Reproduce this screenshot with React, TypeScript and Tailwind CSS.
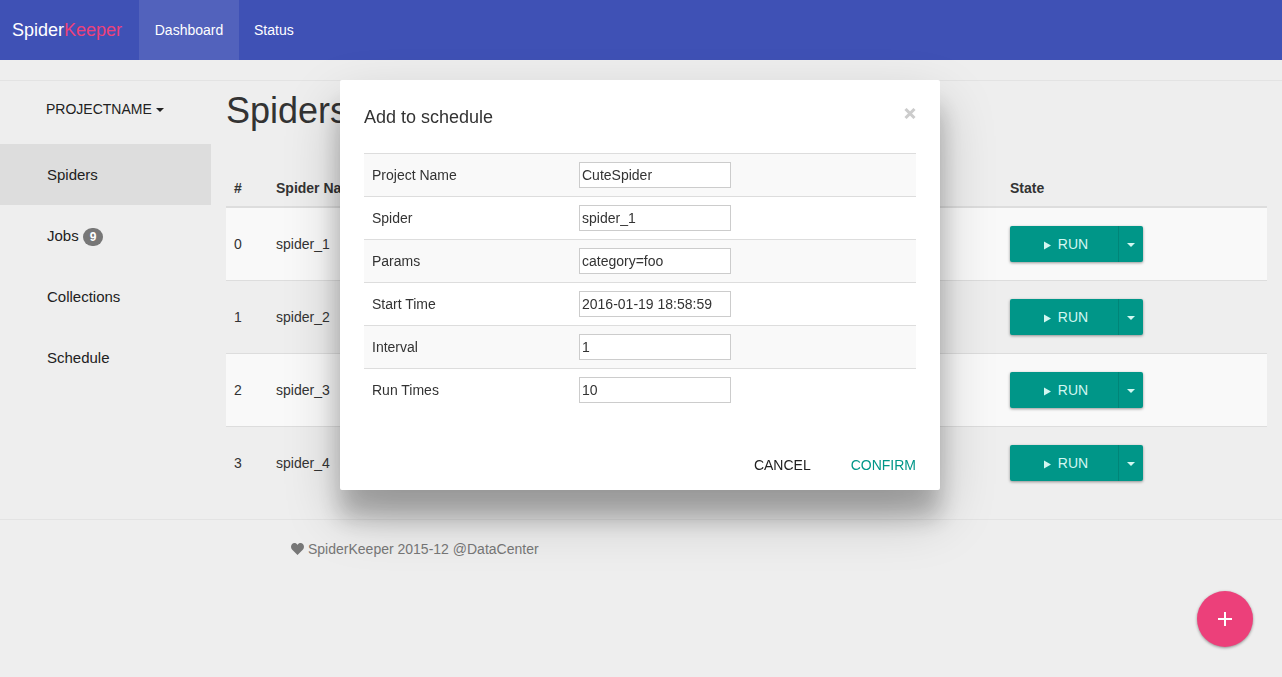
import { useState } from "react";

const navItems = [
  { label: "Spiders", active: true },
  { label: "Jobs", badge: 9 },
  { label: "Collections" },
  { label: "Schedule" },
];

const spiders = ["spider_1", "spider_2", "spider_3", "spider_4"];

const fields = [
  { id: "project", label: "Project Name", value: "CuteSpider" },
  { id: "spider", label: "Spider", value: "spider_1" },
  { id: "params", label: "Params", value: "category=foo" },
  { id: "start", label: "Start Time", value: "2016-01-19 18:58:59" },
  { id: "interval", label: "Interval", value: "1" },
  { id: "times", label: "Run Times", value: "10" },
];

function Caret() {
  return (
    <svg width="8" height="4" viewBox="0 0 8 4" className="mt-0.5" fill="currentColor" aria-hidden="true">
      <path d="M0 0h8L4 4z" />
    </svg>
  );
}

function TopBar() {
  return (
    <nav className="flex h-[60px] bg-[#3f51b5] text-white">
      <a href="#" className="flex w-[139px] items-center pl-3 text-lg">
        Spider<span className="text-[#ec407a]">Keeper</span>
      </a>
      <a href="#dashboard" className="flex w-[100px] items-center justify-center bg-[#5262bc]">
        Dashboard
      </a>
      <a href="#status" className="flex items-center px-[15px]">
        Status
      </a>
    </nav>
  );
}

function Sidebar() {
  return (
    <aside className="w-[211px] shrink-0 text-[#212121]">
      <button type="button" className="flex h-[63px] items-center gap-1 pb-2 pl-[46px]">
        PROJECTNAME <Caret />
      </button>
      <ul className="text-[15px]">
        {navItems.map((item) => (
          <li key={item.label}>
            <a
              href={"#" + item.label.toLowerCase()}
              className={
                item.active
                  ? "flex h-[61px] items-center bg-[#ddd] pl-[47px]"
                  : "flex h-[61px] items-center pl-[47px]"
              }
            >
              {item.label}
              {item.badge && (
                <span className="mt-0.5 ml-1 rounded-full bg-[#777] px-[7px] text-xs leading-[18px] font-bold text-white">
                  {item.badge}
                </span>
              )}
            </a>
          </li>
        ))}
      </ul>
    </aside>
  );
}

function RunButton() {
  return (
    <div className="flex h-9 w-[133px] rounded-[2px] bg-[#009688] text-[#d2f7f1] shadow-[0_1px_3px_rgba(0,0,0,0.4)]">
      <button
        type="button"
        className="flex flex-1 items-center justify-center gap-[7px] border-r border-[#008578] pl-1"
      >
        <svg width="7" height="9" viewBox="0 0 7 9" className="mt-0.5" fill="currentColor" aria-hidden="true">
          <path d="M0 0.5l7 4-7 4z" />
        </svg>
        RUN
      </button>
      <button type="button" aria-label="More run options" className="flex w-6 items-center justify-center">
        <Caret />
      </button>
    </div>
  );
}

function SpiderTable() {
  return (
    <main className="min-w-0 flex-1 px-[15px] pt-2.5 pb-5">
      <h1 className="mb-[39px] text-4xl leading-10">Spiders</h1>
      <table className="w-full table-fixed border-separate border-spacing-0 text-left">
        <thead>
          <tr>
            <th className="w-[42px] border-b-2 border-[#ddd] p-2">#</th>
            <th className="border-b-2 border-[#ddd] p-2">Spider Name</th>
            <th className="w-[265px] border-b-2 border-[#ddd] p-2">State</th>
          </tr>
        </thead>
        <tbody className="[&>tr:nth-child(odd)]:bg-[#f9f9f9] [&>tr+tr>td]:border-t [&>tr+tr>td]:border-[#ddd]">
          {spiders.map((name, i) => (
            <tr key={name}>
              <td className="px-2 py-[18px]">{i}</td>
              <td className="px-2 py-[18px]">{name}</td>
              <td className="px-2 py-[18px]">
                <RunButton />
              </td>
            </tr>
          ))}
        </tbody>
      </table>
    </main>
  );
}

function ScheduleDialog({ onClose }: { onClose: () => void }) {
  return (
    <div className="fixed inset-0 flex items-start justify-center pt-20 pr-0.5">
      <div
        role="dialog"
        aria-labelledby="dialog-title"
        className="w-full max-w-[600px] rounded-[2px] bg-white px-6 shadow-[0_27px_24px_rgba(0,0,0,0.22),0_25px_55px_rgba(0,0,0,0.22)]"
      >
        <div className="flex h-[73px] items-start justify-between pt-[25px]">
          <h2 id="dialog-title" className="text-lg leading-6">
            Add to schedule
          </h2>
          <button type="button" aria-label="Close" onClick={onClose} className="pt-[3px] text-[#ccc]">
            <svg width="12" height="11" viewBox="0 0 12 11" stroke="currentColor" strokeWidth="3" aria-hidden="true">
              <path d="M1.500 1l9 9M10.500 1l-9 9" />
            </svg>
          </button>
        </div>
        <form>
          <table className="w-full border-separate border-spacing-0">
            <tbody className="[&>tr:nth-child(odd)]:bg-[#f9f9f9]">
              {fields.map((f) => (
                <tr key={f.id}>
                  <td className="w-[207px] border-t border-[#ddd] px-2">
                    <label htmlFor={f.id}>{f.label}</label>
                  </td>
                  <td className="border-t border-[#ddd] p-2">
                    <input
                      id={f.id}
                      defaultValue={f.value}
                      className="block h-[26px] w-[152px] border border-[#ccc] bg-white px-0.5"
                    />
                  </td>
                </tr>
              ))}
            </tbody>
          </table>
          <div className="flex justify-end gap-10 pt-11 pb-[15px]">
            <button type="button" onClick={onClose} className="text-[#212121]">
              CANCEL
            </button>
            <button type="button" onClick={onClose} className="text-[#009688]">
              CONFIRM
            </button>
          </div>
        </form>
      </div>
    </div>
  );
}

export default function App() {
  const [open, setOpen] = useState(true);

  return (
    <div className="min-h-screen bg-[#eee] font-['Liberation_Sans',Arial,sans-serif] text-sm leading-5 text-[#333]">
      <TopBar />
      <div className="mt-5 flex border-y border-[#e3e3e3]">
        <Sidebar />
        <SpiderTable />
      </div>
      <footer className="flex items-center gap-1 pt-[19px] pl-[291px] text-[#777]">
        <svg width="13" height="12" viewBox="0 0 13 12" fill="currentColor" aria-hidden="true">
          <path d="M6.5 12L1 6.4C-.3 5-.3 2.600 .9 1.200 2.400-.4 5.200-.4 6.500 2 7.800-.4 10.600-.4 12.100 1.200 13.300 2.600 13.300 5 12 6.400z" />
        </svg>
        SpiderKeeper 2015-12 @DataCenter
      </footer>
      {open && <ScheduleDialog onClose={() => setOpen(false)} />}
      <button
        type="button"
        aria-label="Add"
        onClick={() => setOpen(true)}
        className="fixed right-[29px] bottom-[30px] flex size-14 items-center justify-center rounded-full bg-[#ec407a] text-white shadow-[0_1px_3px_rgba(0,0,0,0.4)]"
      >
        <svg width="14" height="14" viewBox="0 0 14 14" stroke="currentColor" strokeWidth="2" aria-hidden="true">
          <path d="M7 0v14M0 7h14" />
        </svg>
      </button>
    </div>
  );
}
